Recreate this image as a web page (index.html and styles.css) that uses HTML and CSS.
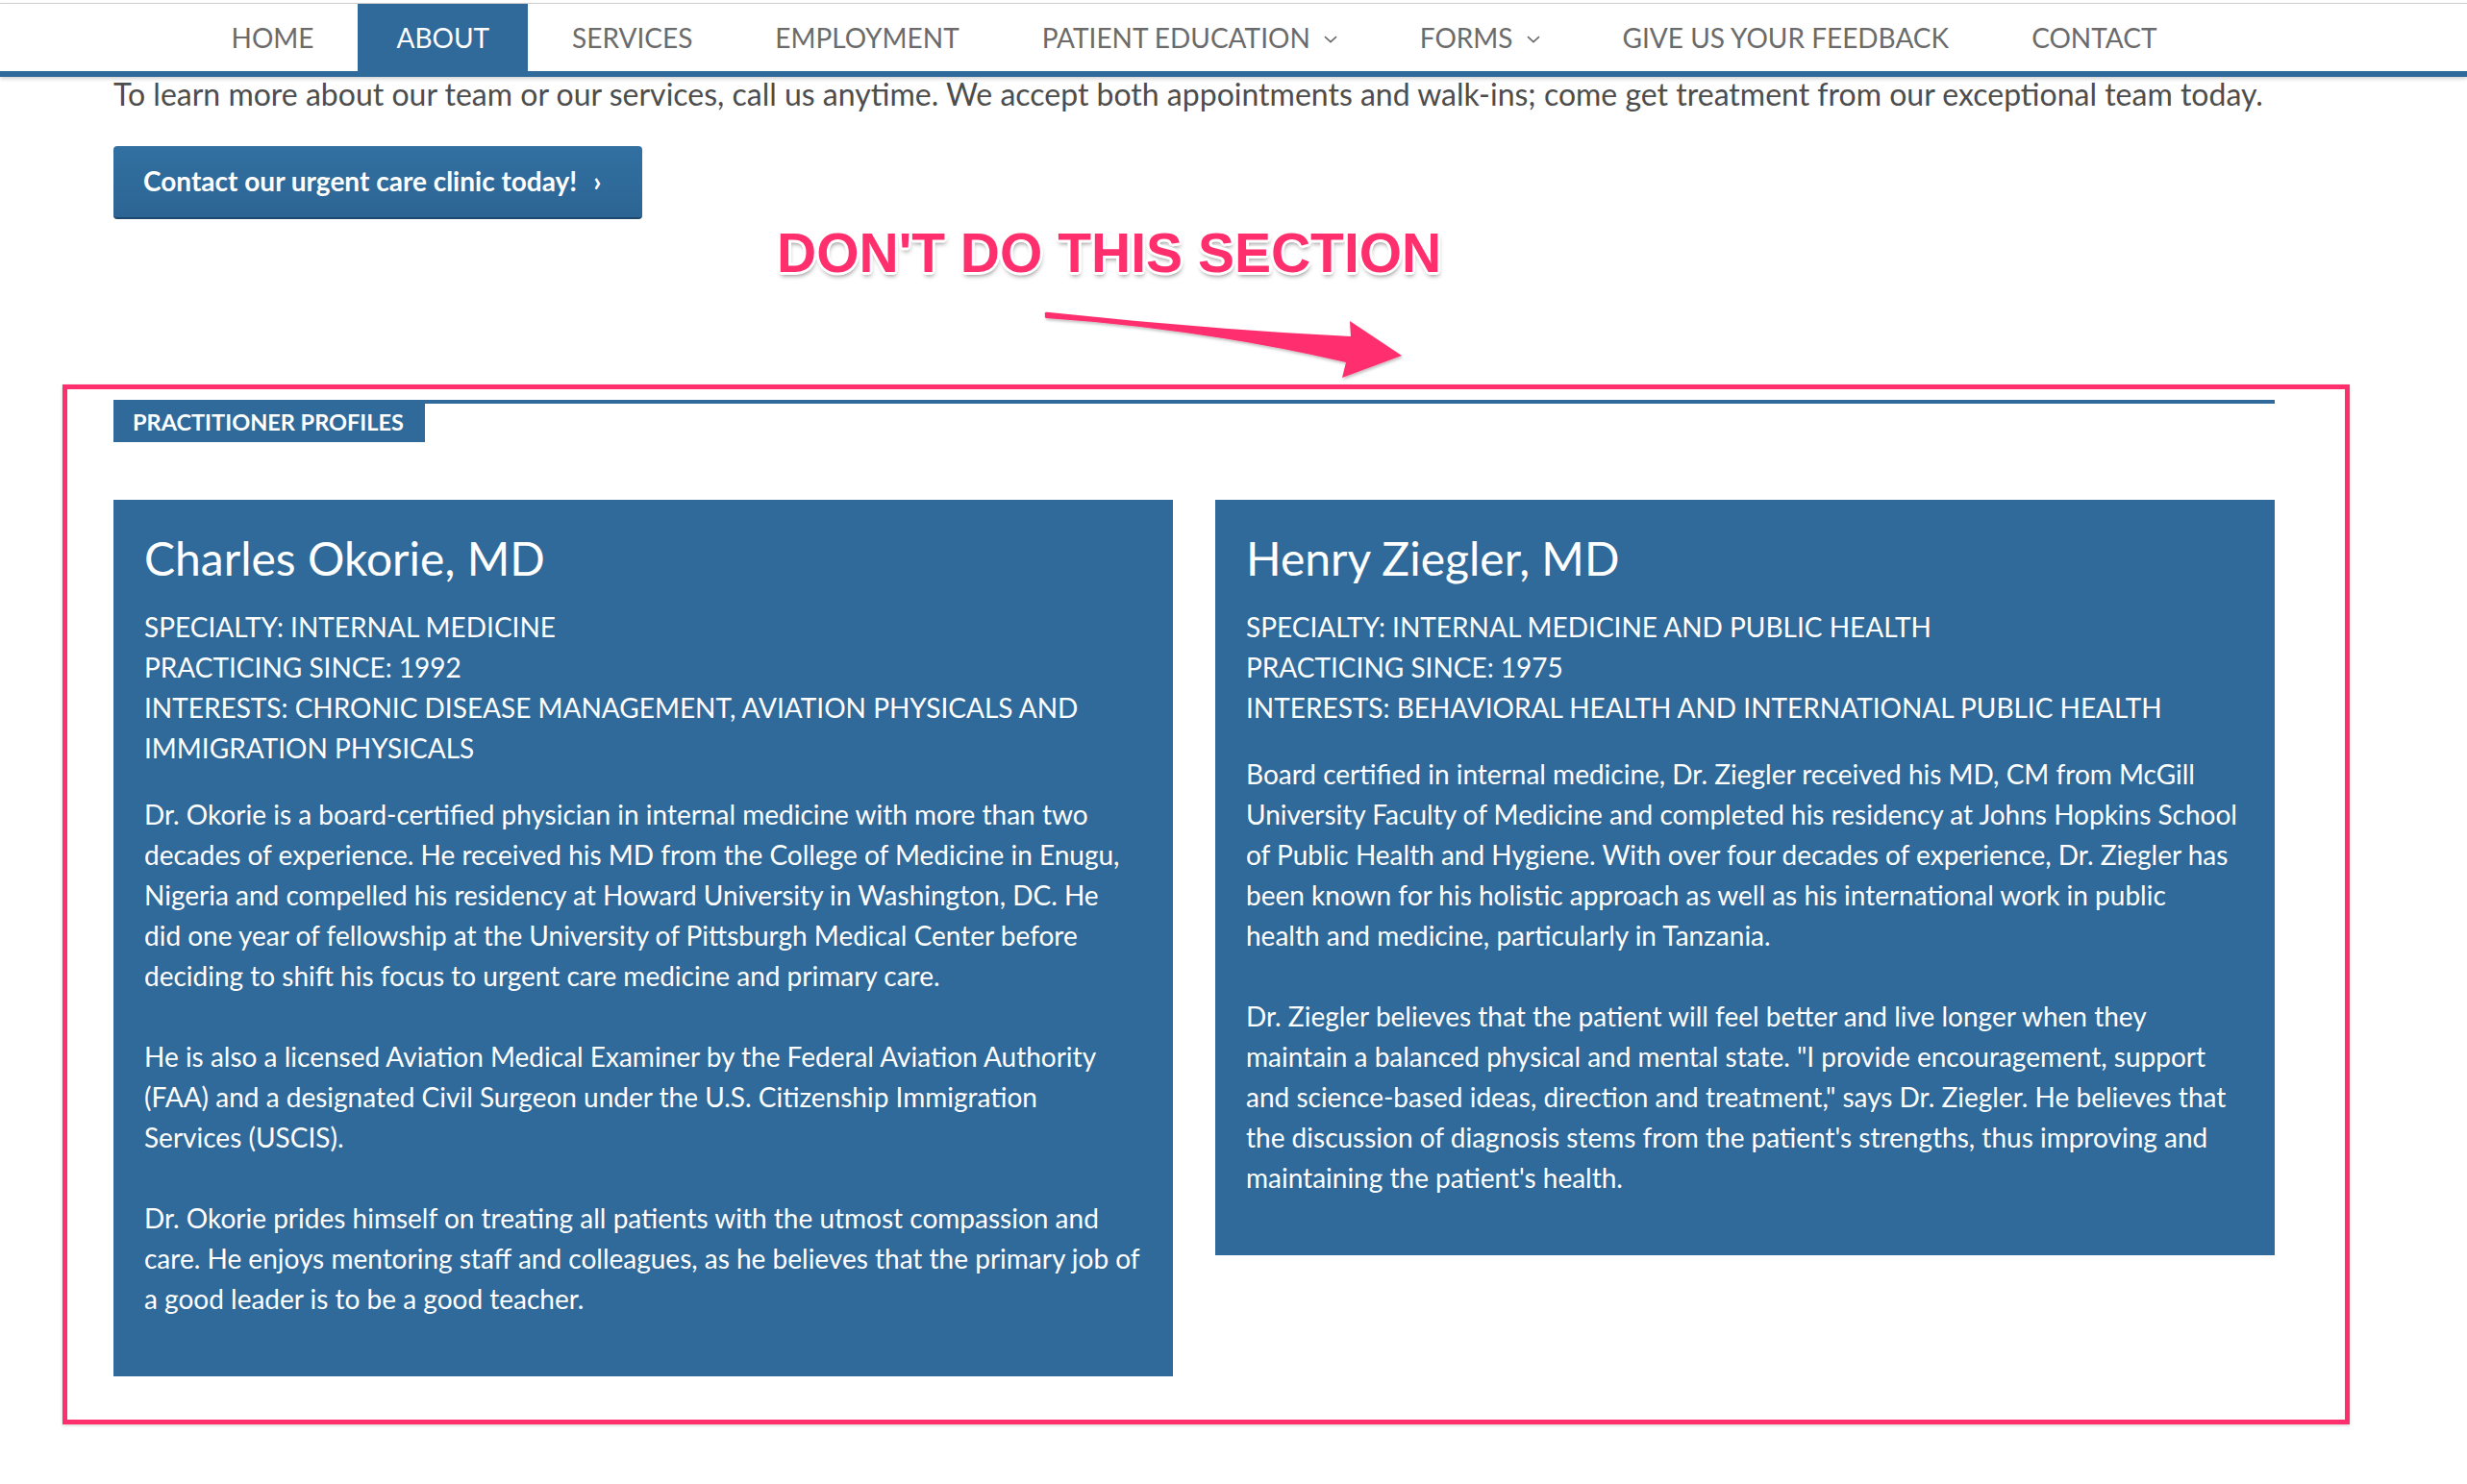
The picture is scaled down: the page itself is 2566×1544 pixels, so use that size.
FILE: index.html
```html
<!DOCTYPE html>
<html lang="en">
<head>
<meta charset="utf-8">
<title>About - Practitioner Profiles</title>
<link rel="stylesheet" href="styles.css">
</head>
<body>
<div class="topline"></div>
<header class="navbar">
  <nav class="container nav">
    <a class="nav-item" href="#">HOME</a>
    <a class="nav-item active" href="#">ABOUT</a>
    <a class="nav-item" href="#">SERVICES</a>
    <a class="nav-item" href="#">EMPLOYMENT</a>
    <a class="nav-item" href="#">PATIENT EDUCATION <svg class="chev" viewBox="0 0 14 8" width="14" height="8"><path d="M1 1.2 L7 6.6 L13 1.2" fill="none" stroke="#6b6b6b" stroke-width="1.6"/></svg></a>
    <a class="nav-item" href="#">FORMS <svg class="chev" viewBox="0 0 14 8" width="14" height="8"><path d="M1 1.2 L7 6.6 L13 1.2" fill="none" stroke="#6b6b6b" stroke-width="1.6"/></svg></a>
    <a class="nav-item" href="#">GIVE US YOUR FEEDBACK</a>
    <a class="nav-item" href="#">CONTACT</a>
  </nav>
</header>

<main class="container">
  <p class="intro">To learn more about our team or our services, call us anytime. We accept both appointments and walk-ins; come get treatment from our exceptional team today.</p>
  <div class="btn-row">
    <a class="btn" href="#">Contact our urgent care clinic today! <span class="btn-chev">&rsaquo;</span></a>
  </div>

  <section class="profiles">
    <div class="section-head"><span class="badge">PRACTITIONER PROFILES</span></div>
    <div class="cards">
      <article class="card">
        <h2>Charles Okorie, MD</h2>
        <p class="meta">SPECIALTY: INTERNAL MEDICINE<br>PRACTICING SINCE: 1992<br>INTERESTS: CHRONIC DISEASE MANAGEMENT, AVIATION PHYSICALS AND IMMIGRATION PHYSICALS</p>
        <p class="bio">Dr. Okorie is a board-certified physician in internal medicine with more than two decades of experience. He received his MD from the College of Medicine in Enugu, Nigeria and compelled his residency at Howard University in Washington, DC. He<br>did one year of fellowship at the University of Pittsburgh Medical Center before deciding to shift his focus to urgent care medicine and primary care.<br><br>He is also a licensed Aviation Medical Examiner by the Federal Aviation Authority (FAA) and a designated Civil Surgeon under the U.S. Citizenship Immigration<br>Services (USCIS).<br><br>Dr. Okorie prides himself on treating all patients with the utmost compassion and care. He enjoys mentoring staff and colleagues, as he believes that the primary job of a good leader is to be a good teacher.</p>
      </article>
      <article class="card">
        <h2>Henry Ziegler, MD</h2>
        <p class="meta">SPECIALTY: INTERNAL MEDICINE AND PUBLIC HEALTH<br>PRACTICING SINCE: 1975<br>INTERESTS: BEHAVIORAL HEALTH AND INTERNATIONAL PUBLIC HEALTH</p>
        <p class="bio">Board certified in internal medicine, Dr. Ziegler received his MD, CM from McGill University Faculty of Medicine and completed his residency at Johns Hopkins School of Public Health and Hygiene. With over four decades of experience, Dr. Ziegler has been known for his holistic approach as well as his international work in public health and medicine, particularly in Tanzania.<br><br>Dr. Ziegler believes that the patient will feel better and live longer when they maintain a balanced physical and mental state. "I provide encouragement, support and science-based ideas, direction and treatment," says Dr. Ziegler. He believes that the discussion of diagnosis stems from the patient's strengths, thus improving and maintaining the patient's health.</p>
      </article>
    </div>
  </section>
</main>

<div class="annot-text">DON'T DO THIS SECTION</div>
<svg class="annot-arrow" viewBox="0 0 400 90" width="400" height="90">
  <defs>
    <filter id="sh" x="-10%" y="-30%" width="120%" height="160%">
      <feDropShadow dx="1" dy="2" stdDeviation="1.5" flood-color="#000" flood-opacity="0.25"/>
    </filter>
  </defs>
  <path filter="url(#sh)" fill="#ff2f6e" d="M9 7.5 C8 5.5 9.5 4.5 11 4.8 Q170 22 327 30 L326 14 L380 50 L318 73 L322 57 Q170 22 10 11 C9 10.5 8.6 9 9 7.5 Z"/>
</svg>
<div class="annot-frame"></div>
</body>
</html>
```

FILE: styles.css
```css
body {
  margin: 0;
  font-family: Lato, "Open Sans", sans-serif;
  background: #ffffff;
  position: relative;
  min-height: 1544px;
}

.topline {
  height: 3px;
  border-bottom: 1px solid #d3d3d3;
}

.navbar {
  border-bottom: 6px solid #2f6a9a;
  box-shadow: 0 2px 4px rgba(0, 0, 0, 0.18);
}

.container {
  margin-left: 118px;
  width: 2248px;
}

.nav {
  display: flex;
  justify-content: center;
  height: 70px;
}

.nav-item {
  display: flex;
  align-items: center;
  padding: 0 40px;
  margin: 0 3px;
  font-size: 28px;
  color: #6b6b6b;
  text-decoration: none;
  white-space: nowrap;
}

.nav-item.active {
  background: #2f6a9a;
  color: #ffffff;
}

.chev {
  margin-left: 14px;
  margin-top: 4px;
}

.intro {
  margin: 0;
  font-size: 32px;
  line-height: 36px;
  color: #4d4d4d;
  white-space: nowrap;
}

.btn-row {
  display: flex;
  margin-top: 36px;
}

.btn {
  display: flex;
  align-items: center;
  height: 76px;
  box-sizing: border-box;
  padding: 0 43px 3px 31px;
  background: linear-gradient(#3170a1, #2c6594);
  border-bottom: 2px solid #1d476c;
  border-radius: 4px;
  color: #ffffff;
  font-weight: 700;
  font-size: 28px;
  text-decoration: none;
  white-space: nowrap;
}

.btn-chev {
  margin-left: 17px;
}

.profiles {
  margin-top: 188px;
}

.section-head {
  display: flex;
  border-top: 4px solid #2f6a9a;
}

.badge {
  display: flex;
  align-items: center;
  height: 40px;
  padding: 0 22px 3px 20px;
  box-sizing: border-box;
  background: #2f6a9a;
  color: #ffffff;
  font-weight: 700;
  font-size: 23.5px;
}

.cards {
  display: flex;
  align-items: flex-start;
  gap: 44px;
  margin-top: 60px;
}

.card {
  flex: 1 1 0;
  background: #2f6a9a;
  color: #ffffff;
  padding: 32px;
}

.card h2 {
  margin: 0 0 21px;
  font-weight: 400;
  font-size: 48px;
  line-height: 1.2;
}

.card .meta {
  margin: 0 0 27px;
  font-size: 28px;
  line-height: 42px;
}

.card .bio {
  margin: 0 0 28px;
  font-size: 28px;
  line-height: 42px;
}

/* annotation overlay */
.annot-text {
  position: absolute;
  left: 808px;
  top: 235px;
  font-family: "Liberation Sans", Arial, sans-serif;
  font-weight: 700;
  font-size: 57px;
  line-height: 57px;
  color: #ff2f6e;
  white-space: nowrap;
  text-shadow:
    3px 0 0 #fff, -3px 0 0 #fff, 0 3px 0 #fff, 0 -3px 0 #fff,
    2px 2px 0 #fff, -2px -2px 0 #fff, 2px -2px 0 #fff, -2px 2px 0 #fff,
    1px 4px 5px rgba(0, 0, 0, 0.45);
}

.annot-arrow {
  position: absolute;
  left: 1078px;
  top: 320px;
  overflow: visible;
}

.annot-frame {
  position: absolute;
  left: 65px;
  top: 400px;
  width: 2379px;
  height: 1082px;
  box-sizing: border-box;
  border: 5px solid #ff2f6e;
  box-shadow: 0 1px 3px rgba(0, 0, 0, 0.2);
}
```
